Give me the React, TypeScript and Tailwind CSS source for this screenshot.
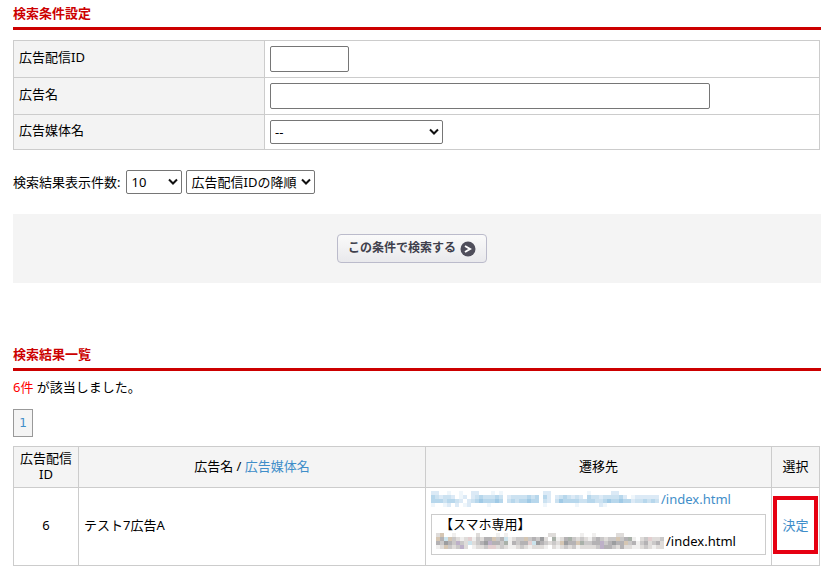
import React from 'react';

// each letter is a shade, each row of the string is one row of 4px tiles
const BLUES: Record<string, string> = {
  a: '#eff6fb',
  b: '#dceaf6',
  c: '#cce2f1',
  d: '#b7d7ec',
  e: '#a0cae6',
  p: '#eccbe0',
};

const GREYS: Record<string, string> = {
  a: '#f0efee',
  b: '#dfdcda',
  c: '#cac8c8',
  d: '#b4b2b4',
  e: '#9c9d9f',
  t: '#d5c6b3',
  p: '#e3cfd0',
  q: '#cbe3ec',
  v: '#bdb0c8',
  g: '#a9b1a9',
};

const BLUE_ROWS = [
  'bb..a..a..bb...a.a..........bb.........a.....bb..........',
  'dcbccb.ab.bcdcccdc.bccccdcd.db.bcdcbcb.dccbccccdb.abbbbbb',
  'dddcddcb.bcdeddded.cdcddedd.cb.ceddddccddccdeddeddbccdcdc',
  'a..ab.b.ab....a.............a.......a.....ba.............',
];

const GREY_ROWS = [
  'bt..a.....b....a.a..........bb......a..a.....bb..........',
  'tdqtcbabpacbddtcdqabcctcdceb.gabdgcbcbacdcbcctcdga.bcpbbc',
  'dcedcvcbqbcdevddcgadcddpqedcbcbteddtgccddvcdeddtcdacdbcdb',
  'abtcbcvb.abbcppbcbaabcbabbba.babcbcabbbbcvddcbdbbaabcbabb',
];

interface MosaicProps {
  rows: string[];
  shades: Record<string, string>;
}

const Mosaic: React.FC<MosaicProps> = ({ rows, shades }) => (
  <svg
    className="shrink-0"
    width={rows[0].length * 4 + 2}
    height={rows.length * 4}
    shapeRendering="crispEdges"
    aria-hidden="true"
  >
    {rows.map((row, y) =>
      row.split('').map((tone, x) =>
        shades[tone] ? (
          <rect key={`${x}-${y}`} x={x * 4} y={y * 4} width={4} height={4} fill={shades[tone]} />
        ) : null
      )
    )}
  </svg>
);

const Heading: React.FC<{ children: React.ReactNode }> = ({ children }) => (
  <h2 className="h-[26px] border-b-3 border-[#cc0000] text-[13px] leading-[18px] font-bold text-[#cc0000]">
    {children}
  </h2>
);

const Chevron = () => (
  <svg
    className="pointer-events-none absolute right-1 top-2 h-2 w-2.5"
    viewBox="0 0 10 8"
    fill="none"
    stroke="#111"
    strokeWidth={2}
  >
    <path d="M1 1.5L5 5.5L9 1.5" />
  </svg>
);

interface SelectProps {
  id: string;
  label?: string;
  options: string[];
  className: string;
}

const Select: React.FC<SelectProps> = ({ id, label, options, className }) => (
  <span className={`relative inline-block h-6 ${className}`}>
    <select
      id={id}
      aria-label={label}
      className="block h-full w-full appearance-none rounded-[2px] border border-[#767676] bg-white pb-px pl-1 text-[13px] leading-[20px]"
    >
      {options.map((option) => (
        <option key={option}>{option}</option>
      ))}
    </select>
    <Chevron />
  </span>
);

const conditionHead = 'w-[251px] border border-[#cccccc] bg-[#f3f3f3] px-[5px] pb-1 text-left align-middle font-normal';
const conditionCell = 'border border-[#cccccc] px-[5px] py-0 align-middle';
const resultHead = 'border border-[#cccccc] bg-[#f4f4f4] pb-[3px] font-normal';
const resultCell = 'border border-[#cccccc]';

const App: React.FC = () => {
  return (
    <main className="bg-white pt-1 pr-[14px] pb-3 pl-[13px] font-['Noto_Sans','Noto_Sans_CJK_JP',sans-serif] text-[13px] leading-[20px] text-black">
      <form onSubmit={(e) => e.preventDefault()}>
        <Heading>検索条件設定</Heading>

        <div className="pr-px">
          <table className="mt-[10px] w-full table-fixed border-collapse">
            <tbody>
              <tr className="h-[37px]">
                <th scope="row" className={conditionHead}>
                  <label htmlFor="ad-id">広告配信ID</label>
                </th>
                <td className={conditionCell}>
                  <input id="ad-id" type="text" className="block h-[26px] w-[79px] rounded-[2px] border border-[#767676] px-1" />
                </td>
              </tr>
              <tr className="h-[37px]">
                <th scope="row" className={conditionHead}>
                  <label htmlFor="ad-name">広告名</label>
                </th>
                <td className={conditionCell}>
                  <input id="ad-name" type="text" className="block h-[26px] w-[440px] rounded-[2px] border border-[#767676] px-1" />
                </td>
              </tr>
              <tr className="h-[35px]">
                <th scope="row" className={conditionHead}>
                  <label htmlFor="ad-media">広告媒体名</label>
                </th>
                <td className={conditionCell}>
                  <Select id="ad-media" options={['--']} className="w-[173px] align-middle" />
                </td>
              </tr>
            </tbody>
          </table>
        </div>

        <div className="mt-5 flex items-center">
          <label htmlFor="per-page" className="mr-[6px] pb-px">検索結果表示件数:</label>
          <Select id="per-page" options={['10', '20', '50']} className="mr-1 w-14" />
          <Select id="sort-order" label="並び順" options={['広告配信IDの降順', '広告配信IDの昇順']} className="w-[129px]" />
        </div>

        <div className="mt-5 flex justify-center bg-[#f4f4f4] py-5 pr-[10px]">
          <button
            type="submit"
            className="flex h-[29px] items-center gap-1 rounded-[4px] border border-[#bbbbcb] bg-linear-to-b from-[#fafafa] to-[#e9e9ec] px-[10px] text-[12px] font-bold text-[#3f3f4c]"
          >
            <span className="pb-px">この条件で検索する</span>
            <svg className="h-4 w-4" viewBox="0 0 16 16">
              <circle cx="8" cy="8" r="7.5" fill="#4f4e5b" />
              <path d="M5 5L10 8L5 11" fill="none" stroke="#fff" strokeWidth={2} />
            </svg>
          </button>
        </div>
      </form>

      <section className="mt-[62px]">
        <Heading>検索結果一覧</Heading>

        <p className="mt-[6px]">
          <span className="text-[#ff0000]">6件</span> が該当しました。
        </p>

        <nav className="mt-3 flex">
          <a
            href="#page-1"
            className="flex h-7 w-5 items-center justify-center border border-[#999999] bg-[#f4f4f4] font-['DejaVu_Sans',sans-serif] text-[12px] text-[#3f8ec9]"
          >
            1
          </a>
        </nav>

        <div className="pr-px">
          <table className="mt-[9px] w-full table-fixed border-collapse">
            <colgroup>
              <col className="w-[65px]" />
              <col />
              <col className="w-[346px]" />
              <col className="w-12" />
            </colgroup>
            <thead>
              <tr className="h-[41px]">
                <th scope="col" className={`${resultHead} leading-[16px]`}>
                  広告配信 ID
                </th>
                <th scope="col" className={resultHead}>
                  広告名 / <a href="#media" className="text-[#3f8ec9]">広告媒体名</a>
                </th>
                <th scope="col" className={resultHead}>遷移先</th>
                <th scope="col" className={resultHead}>選択</th>
              </tr>
            </thead>
            <tbody>
              <tr className="h-[78px]">
                <td className={`${resultCell} pb-1 text-center`}>6</td>
                <td className={`${resultCell} px-[5px] pb-1`}>テスト7広告A</td>
                <td className={`${resultCell} px-[5px] pb-[10px]`}>
                  <a href="#index" className="flex h-5 items-center text-[#3f8ec9]">
                    <Mosaic rows={BLUE_ROWS} shades={BLUES} />
                    /index.html
                  </a>
                  <div className="mt-[5px] border border-[#cccccc] px-1 pt-px pb-1 leading-[17px]">
                    <div className="pl-1">【スマホ専用】</div>
                    <div className="flex items-center">
                      <Mosaic rows={GREY_ROWS} shades={GREYS} />
                      /index.html
                    </div>
                  </div>
                </td>
                <td className={`${resultCell} p-0 pb-1`}>
                  <a href="#select" className="mx-px flex h-[58px] items-center justify-center border-4 border-[#e60012] text-[#3f8ec9]">
                    決定
                  </a>
                </td>
              </tr>
            </tbody>
          </table>
        </div>
      </section>
    </main>
  );
};

export default App;
